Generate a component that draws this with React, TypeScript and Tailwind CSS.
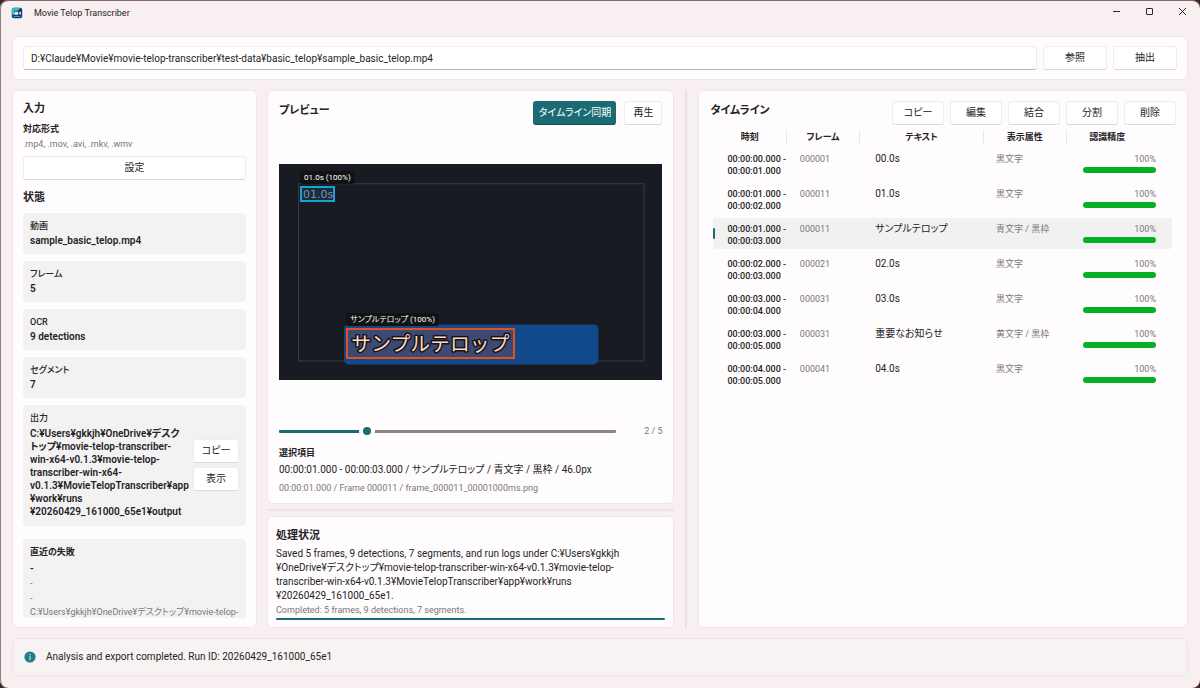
import { useState } from "react";
import type { CSSProperties, ReactNode } from "react";
import clsx from "clsx";

type Segment = {
  start: string;
  end: string;
  frame: string;
  text: string;
  attributes: string;
  confidence: number;
};

const SEGMENTS: Segment[] = [
  { start: "00:00:00.000", end: "00:00:01.000", frame: "000001", text: "00.0s", attributes: "黒文字", confidence: 100 },
  { start: "00:00:01.000", end: "00:00:02.000", frame: "000011", text: "01.0s", attributes: "黒文字", confidence: 100 },
  { start: "00:00:01.000", end: "00:00:03.000", frame: "000011", text: "サンプルテロップ", attributes: "青文字 / 黒枠", confidence: 100 },
  { start: "00:00:02.000", end: "00:00:03.000", frame: "000021", text: "02.0s", attributes: "黒文字", confidence: 100 },
  { start: "00:00:03.000", end: "00:00:04.000", frame: "000031", text: "03.0s", attributes: "黒文字", confidence: 100 },
  { start: "00:00:03.000", end: "00:00:05.000", frame: "000031", text: "重要なお知らせ", attributes: "黄文字 / 黒枠", confidence: 100 },
  { start: "00:00:04.000", end: "00:00:05.000", frame: "000041", text: "04.0s", attributes: "黒文字", confidence: 100 },
];

const STATS = [
  { label: "動画", value: "sample_basic_telop.mp4" },
  { label: "フレーム", value: "5" },
  { label: "OCR", value: "9 detections" },
  { label: "セグメント", value: "7" },
];

const OUTPUT_LINES = [
  "C:¥Users¥gkkjh¥OneDrive¥デスク",
  "トップ¥movie-telop-transcriber-",
  "win-x64-v0.1.3¥movie-telop-",
  "transcriber-win-x64-",
  "v0.1.3¥MovieTelopTranscriber¥app",
  "¥work¥runs",
  "¥20260429_161000_65e1¥output",
];

const LOG_LINES = [
  "Saved 5 frames, 9 detections, 7 segments, and run logs under C:¥Users¥gkkjh",
  "¥OneDrive¥デスクトップ¥movie-telop-transcriber-win-x64-v0.1.3¥movie-telop-",
  "transcriber-win-x64-v0.1.3¥MovieTelopTranscriber¥app¥work¥runs",
  "¥20260429_161000_65e1.",
];

const HEADERS = ["時刻", "フレーム", "テキスト", "表示属性", "認識精度"];

const FRAME_COUNT = 5;

export default function App() {
  const [path, setPath] = useState(
    "D:¥Claude¥Movie¥movie-telop-transcriber¥test-data¥basic_telop¥sample_basic_telop.mp4"
  );
  const [selected, setSelected] = useState(2);
  const [frame, setFrame] = useState(2);

  return (
    <div className="h-screen overflow-hidden bg-[#4a2228] font-[Roboto,'Noto_Sans_CJK_JP',sans-serif] text-[10px] leading-[14px] text-[#262325] [font-feature-settings:'palt']">
      <div className="flex h-full flex-col overflow-hidden rounded-lg border-t border-t-[#85696e] bg-[#f8eff0] shadow-[inset_1px_0_#8b8184]">
        <TitleBar />

        <div className="mx-3 flex shrink-0 gap-1.5 rounded-md border border-[#f0e6e8] bg-[#fefcfd] px-[10px] py-[9px]">
          <input
            aria-label="動画ファイル"
            className="h-6 min-w-0 flex-1 rounded-[3px] border border-[#efebec] border-b-[#b9b5b7] bg-white px-[7px] outline-none"
            value={path}
            onChange={(e) => setPath(e.target.value)}
          />
          <Button className="w-16">参照</Button>
          <Button className="w-16">抽出</Button>
        </div>

        <main className="mx-3 mt-[10px] flex min-h-0 flex-1">
          <StatusPanel />

          <div className="ml-[10px] flex min-w-0 flex-[407] flex-col">
            <PreviewPanel frame={frame} onFrameChange={setFrame} />
            <div className="my-[5px] h-0.5 shrink-0 bg-[#eee3e5]" />
            <section className="shrink-0 rounded-md border border-[#f0e6e8] bg-[#fefcfd] px-2 pt-[11px] pb-[7px]">
              <h2 className="text-[11px] leading-4 font-semibold">処理状況</h2>
              <p className="mt-[3px] leading-[14px] whitespace-nowrap">
                <Lines lines={LOG_LINES} />
              </p>
              <p className="mt-px text-[9px] leading-3 text-[#7b7779]">Completed: 5 frames, 9 detections, 7 segments.</p>
              <div role="progressbar" aria-label="処理状況" aria-valuenow={100} className="mt-0.5 h-0.5 rounded-full bg-[#1b6b78]" />
            </section>
          </div>

          <div className="mx-[11px] w-0.5 shrink-0 bg-[#ebe0e2]" />

          <TimelinePanel selected={selected} onSelect={setSelected} />
        </main>

        <footer className="mx-3 mt-[10px] mb-3 flex h-[38px] shrink-0 items-center gap-[10px] rounded-md border border-[#eee5e6] bg-[#f6f3f2] px-[11px]">
          <svg viewBox="0 0 12 12" className="size-3" aria-hidden="true">
            <circle cx="6" cy="6" r="5.6" fill="#1f7f8a" />
            <circle cx="6" cy="3.6" r="0.7" fill="#d6f0f2" />
            <path d="M6 5.2v3.4" stroke="#d6f0f2" strokeWidth="1" strokeLinecap="round" />
          </svg>
          <span>Analysis and export completed. Run ID: 20260429_161000_65e1</span>
        </footer>
      </div>
    </div>
  );
}

function TitleBar() {
  return (
    <header className="flex h-[35px] shrink-0 items-start justify-between pr-px pl-[11px]">
      <div className="mt-[5px] flex items-center gap-[11px]">
        <svg viewBox="0 0 12 12" className="size-3" aria-hidden="true">
          <rect x="0.8" y="0.8" width="10.4" height="10.4" rx="2" fill="#12406b" />
          <path d="M0.8 3a2.2 2.2 0 0 1 2.2-2.2h6.2l-2.4 3h-3.8v4h-2.2z" fill="#35c2bd" />
          <path d="M3.4 4.8h3.6v3h-3.6z" fill="#e4f6f8" />
          <path d="M7.3 6.3l2.4-1.7v3.4z" fill="#e4f6f8" />
          <path d="M2.5 9.5h7" stroke="#2f9fd0" strokeWidth="1" />
        </svg>
        <span className="text-[9px]">Movie Telop Transcriber</span>
      </div>
      <div className="flex">
        <WindowButton label="最小化">
          <path d="M1 4.5h7" />
        </WindowButton>
        <WindowButton label="最大化">
          <rect x="1.5" y="1.5" width="6" height="6" rx="0.5" />
        </WindowButton>
        <WindowButton label="閉じる">
          <path d="M1 1l7 7M8 1l-7 7" />
        </WindowButton>
      </div>
    </header>
  );
}

function WindowButton({ label, children }: { label: string; children: ReactNode }) {
  return (
    <button type="button" aria-label={label} className="flex h-[21px] w-[33px] items-center justify-center">
      <svg viewBox="0 0 9 9" className="size-[9px]" fill="none" stroke="#2b2628" strokeWidth="1">
        {children}
      </svg>
    </button>
  );
}

function Button({
  className,
  primary,
  children,
}: {
  className?: string;
  primary?: boolean;
  children: ReactNode;
}) {
  return (
    <button
      type="button"
      className={clsx(
        "h-6 shrink-0 rounded-[3px] border",
        primary
          ? "border-[#1b6b75] border-b-[#124b53] bg-[#1b6b75] text-white"
          : "border-[#f0ecee] border-b-[#dcd8da] bg-white",
        className
      )}
    >
      {children}
    </button>
  );
}

function Lines({ lines }: { lines: string[] }) {
  return (
    <>
      {lines.map((line) => (
        <span key={line} className="block">
          {line}
        </span>
      ))}
    </>
  );
}

function StatusPanel() {
  return (
    <aside className="flex w-[245px] shrink-0 flex-col rounded-md border border-[#f0e6e8] bg-[#fefcfd] px-[10px] pt-[10px] pb-[9px]">
      <h2 className="text-[11px] leading-4 font-semibold">入力</h2>
      <h3 className="mt-[5px] text-[9px] leading-[14px] font-semibold">対応形式</h3>
      <p className="mt-px text-[9px] leading-[14px] text-[#7b7779]">.mp4, .mov, .avi, .mkv, .wmv</p>
      <Button className="mt-[5px] w-full">設定</Button>
      <h2 className="mt-[10px] text-[11px] leading-4 font-semibold">状態</h2>

      <div className="mt-[7px] flex min-h-0 flex-1 flex-col overflow-hidden">
        <dl className="flex flex-col gap-[7px]">
          {STATS.map((stat) => (
            <div key={stat.label} className="rounded bg-[#f3f2f3] px-[7px] py-1.5">
              <dt className="text-[9px] leading-[14px] font-medium">{stat.label}</dt>
              <dd className="leading-[15px] font-semibold">{stat.value}</dd>
            </div>
          ))}
          <div className="flex items-center justify-between rounded bg-[#f3f2f3] px-[7px] pt-1.5 pb-2">
            <div>
              <dt className="text-[9px] leading-[14px] font-medium">出力</dt>
              <dd className="mt-0.5 leading-[13px] font-semibold whitespace-nowrap">
                <Lines lines={OUTPUT_LINES} />
              </dd>
            </div>
            <div className="flex shrink-0 flex-col gap-1">
              <Button className="w-[46px]">コピー</Button>
              <Button className="w-[46px]">表示</Button>
            </div>
          </div>
        </dl>

        <div className="mt-[13px] flex-1 rounded-t bg-[#f3f2f3] px-[7px] pt-1.5">
          <h3 className="text-[9px] leading-[14px] font-semibold">直近の失敗</h3>
          <p className="mt-0.5 leading-[15px] font-semibold">-</p>
          <p className="text-[9px] leading-[15px] text-[#7b7779]">-</p>
          <p className="text-[9px] leading-[14px] text-[#7b7779]">-</p>
          <p className="text-[9px] leading-[14px] whitespace-nowrap text-[#7b7779]">C:¥Users¥gkkjh¥OneDrive¥デスクトップ¥movie-telop-</p>
        </div>
      </div>
    </aside>
  );
}

function PreviewPanel({
  frame,
  onFrameChange,
}: {
  frame: number;
  onFrameChange: (frame: number) => void;
}) {
  const progress = (frame - 1) / (FRAME_COUNT - 1);

  return (
    <section className="flex min-h-0 flex-1 flex-col rounded-md border border-[#f0e6e8] bg-[#fefcfd] px-[11px] pt-[10px] pb-[7px]">
      <div className="flex items-start gap-2">
        <h2 className="flex-1 text-[11px] leading-5 font-semibold">プレビュー</h2>
        <Button primary className="w-[83px]">タイムライン同期</Button>
        <Button className="w-[38px]">再生</Button>
      </div>

      <div className="flex min-h-0 flex-1 items-center pb-1">
        <div className="relative aspect-video w-full bg-[#181b22]">
          <svg viewBox="0 0 383 215" className="block size-full">
            <rect x="19.5" y="19.5" width="345" height="177" fill="none" stroke="#3a3d45" strokeWidth="1" />
            <rect x="65" y="160" width="254" height="40" rx="5" fill="#12498b" />
            <text x="24" y="34" fontSize="11" fill="#8a9298" className="font-['DejaVu_Sans',sans-serif]">01.0s</text>
          </svg>
          <Detection label="01.0s (100%)" className="top-[10%] left-[5.5%] w-[9%]" boxClassName="h-4 border-[#1ba1d6] bg-[#1ba1d6]/15" />
          <Detection label="サンプルテロップ (100%)" className="top-[76%] left-[17.5%] w-[44%]" boxClassName="h-[31px] border-[#e2501f] bg-[#e2501f]/20">
            <svg viewBox="0 0 166 27" className="block size-full">
              <text
                x="83"
                y="21"
                textAnchor="middle"
                fontSize="20"
                fill="#ffd9b8"
                stroke="#15121a"
                strokeWidth="3"
                strokeLinejoin="round"
                paintOrder="stroke"
                className="[font-feature-settings:normal]"
              >
                サンプルテロップ
              </text>
            </svg>
          </Detection>
        </div>
      </div>

      <div className="flex items-center justify-between">
        <input
          type="range"
          aria-label="フレーム位置"
          min={1}
          max={FRAME_COUNT}
          value={frame}
          onChange={(e) => onFrameChange(Number(e.target.value))}
          style={{ "--pos": `calc(${progress} * (100% - 16px))` } as CSSProperties}
          className="h-4 w-[88%] appearance-none rounded-full bg-transparent bg-[linear-gradient(to_right,#1b6b75_var(--pos),#8b8587_var(--pos))] bg-[length:100%_3px] bg-center bg-no-repeat outline-none [&::-webkit-slider-thumb]:size-4 [&::-webkit-slider-thumb]:appearance-none [&::-webkit-slider-thumb]:rounded-full [&::-webkit-slider-thumb]:border-4 [&::-webkit-slider-thumb]:border-white [&::-webkit-slider-thumb]:bg-[#1b6b75]"
        />
        <span className="text-[9px] text-[#7b7779]">
          {frame} / {FRAME_COUNT}
        </span>
      </div>

      <h3 className="mt-[7px] text-[9px] leading-[14px] font-semibold">選択項目</h3>
      <p className="mt-0.5 leading-4">00:00:01.000 - 00:00:03.000 / サンプルテロップ / 青文字 / 黒枠 / 46.0px</p>
      <p className="mt-0.5 text-[9px] leading-4 text-[#7b7779]">00:00:01.000 / Frame 000011 / frame_000011_00001000ms.png</p>
    </section>
  );
}

function Detection({
  label,
  className,
  boxClassName,
  children,
}: {
  label: string;
  className: string;
  boxClassName: string;
  children?: ReactNode;
}) {
  return (
    <div className={clsx("absolute", className)}>
      <span className="absolute bottom-full left-0 mb-[2px] rounded-[3px] bg-[#111214] px-1 text-[8px] leading-[13px] whitespace-nowrap text-white">
        {label}
      </span>
      <div className={clsx("border-2", boxClassName)}>{children}</div>
    </div>
  );
}

function TimelinePanel({
  selected,
  onSelect,
}: {
  selected: number;
  onSelect: (index: number) => void;
}) {
  return (
    <section className="min-w-0 flex-[465] rounded-md border border-[#f0e6e8] bg-[#fefcfd] px-[11px] pt-[10px]">
      <div className="flex items-start gap-1.5">
        <h2 className="flex-1 text-[11px] leading-5 font-semibold">タイムライン</h2>
        <Button className="w-[52px]">コピー</Button>
        <Button className="w-[52px]">編集</Button>
        <Button className="w-[52px]">結合</Button>
        <Button className="w-[52px]">分割</Button>
        <Button className="w-[52px]">削除</Button>
      </div>

      <div className="mt-px pr-1 pl-[3px]">
        <table className="w-full table-fixed border-separate border-spacing-x-0 border-spacing-y-1 text-[9px] leading-3">
          <colgroup>
            <col className="w-[16%]" />
            <col className="w-[16%]" />
            <col className="w-[27%]" />
            <col className="w-[18%]" />
            <col className="w-[23%]" />
          </colgroup>
          <thead>
            <tr>
              {HEADERS.map((header) => (
                <th
                  key={header}
                  className="h-[14px] border-r border-[#ebe6e8] p-0 text-center font-semibold last:border-r-0 last:pr-6"
                >
                  {header}
                </th>
              ))}
            </tr>
          </thead>
          <tbody>
            {SEGMENTS.map((segment, index) => (
              <tr
                key={`${segment.start}-${segment.end}`}
                onClick={() => onSelect(index)}
                className={clsx(
                  "h-[31px] align-top",
                  index === selected && "[&>td]:bg-[#f2f1f2] [&>td:first-child]:before:bg-[#1b6b75]"
                )}
              >
                <td className="relative rounded-l-[3px] pt-[5px] pl-[14px] font-medium whitespace-nowrap before:absolute before:top-[10px] before:left-0 before:h-[11px] before:w-0.5 before:rounded-full">
                  {segment.start} -<br />
                  {segment.end}
                </td>
                <td className="pt-[5px] pl-[13px] text-[#7b7779]">{segment.frame}</td>
                <td className="pt-[5px] pl-[15px] text-[10px]">{segment.text}</td>
                <td className="pt-[5px] pl-3 text-[#7b7779]">{segment.attributes}</td>
                <td className="rounded-r-[3px] pt-[5px] pr-4 pl-4 text-right text-[#7b7779]">
                  {segment.confidence}%
                  <div className="mt-0.5 h-1.5 rounded-full">
                    <div className="h-full rounded-full bg-[#06b025]" style={{ width: `${segment.confidence}%` }} />
                  </div>
                </td>
              </tr>
            ))}
          </tbody>
        </table>
      </div>
    </section>
  );
}
